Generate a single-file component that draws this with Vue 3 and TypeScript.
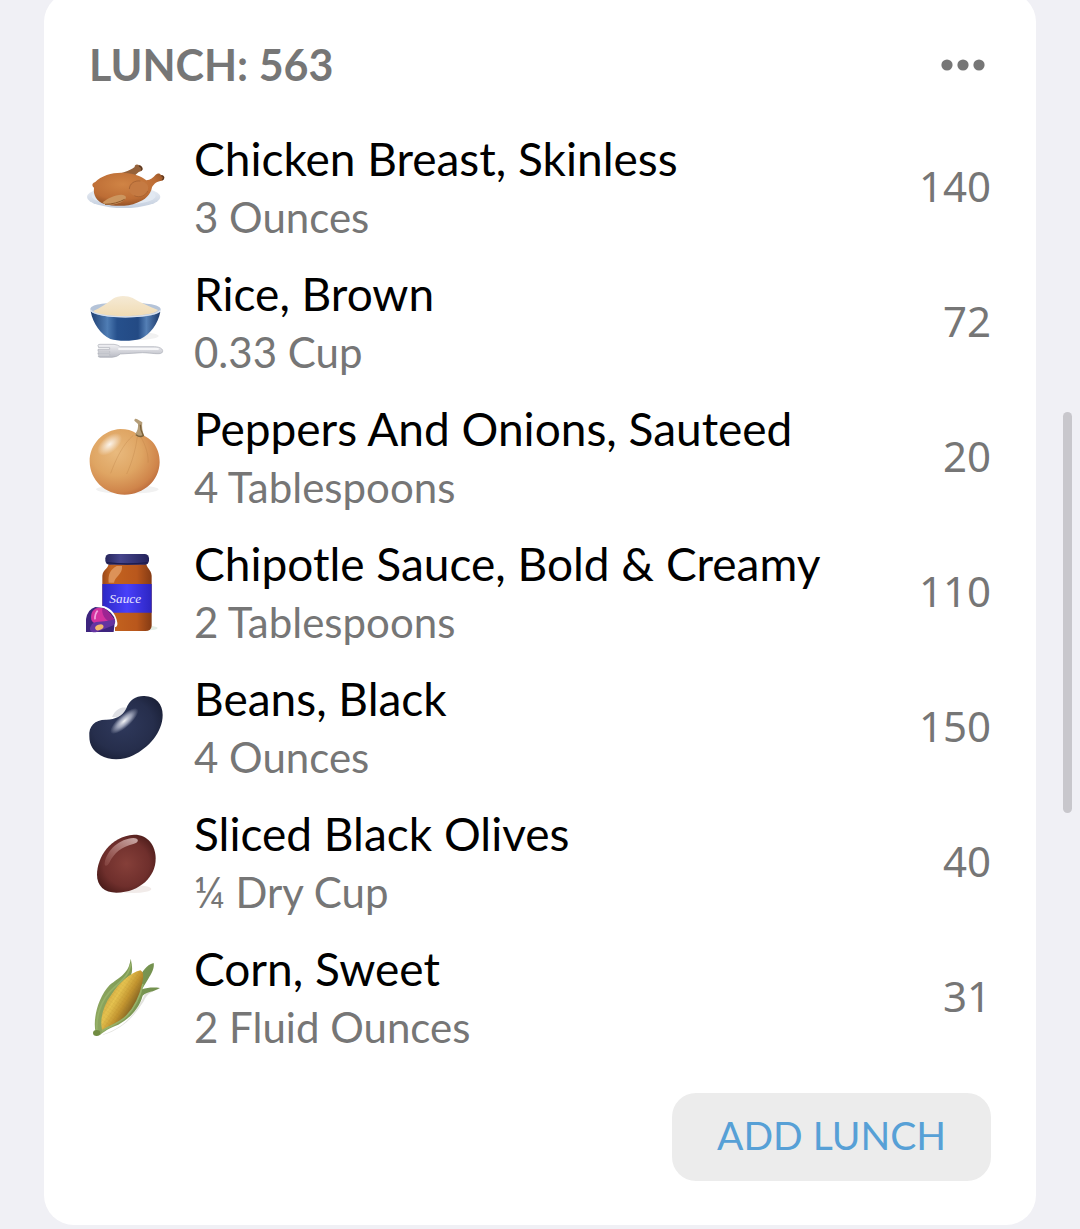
<script setup lang="ts">
import { computed, ref } from 'vue'

type Picture = 'chicken' | 'rice' | 'onion' | 'sauce' | 'bean' | 'olive' | 'corn'

interface Food {
  picture: Picture
  name: string
  serving: string
  calories: number
}

const foods = ref<Food[]>([
  { picture: 'chicken', name: 'Chicken Breast, Skinless', serving: '3 Ounces', calories: 140 },
  { picture: 'rice', name: 'Rice, Brown', serving: '0.33 Cup', calories: 72 },
  { picture: 'onion', name: 'Peppers And Onions, Sauteed', serving: '4 Tablespoons', calories: 20 },
  { picture: 'sauce', name: 'Chipotle Sauce, Bold & Creamy', serving: '2 Tablespoons', calories: 110 },
  { picture: 'bean', name: 'Beans, Black', serving: '4 Ounces', calories: 150 },
  { picture: 'olive', name: 'Sliced Black Olives', serving: '¼ Dry Cup', calories: 40 },
  { picture: 'corn', name: 'Corn, Sweet', serving: '2 Fluid Ounces', calories: 31 },
])

const total = computed(() => foods.value.reduce((sum, food) => sum + food.calories, 0))
</script>

<template>
  <main class="page">
    <section class="card">
      <header class="head">
        <h2 class="heading">LUNCH: {{ total }}</h2>
        <button class="more" type="button" aria-label="Lunch options">
          <svg viewBox="0 0 44 12" aria-hidden="true">
            <circle cx="6" cy="6" r="5.6" />
            <circle cx="22" cy="6" r="5.6" />
            <circle cx="38" cy="6" r="5.6" />
          </svg>
        </button>
      </header>

      <ul class="foods">
        <li v-for="food in foods" :key="food.name" class="food">
          <svg v-if="food.picture === 'chicken'" class="picture" viewBox="0 0 270 300" aria-hidden="true">
            <defs>
              <radialGradient id="roast" cx="0.42" cy="0.35" r="0.7">
                <stop offset="0" stop-color="#d08445" />
                <stop offset="0.65" stop-color="#bd6d35" />
                <stop offset="1" stop-color="#8a4b22" />
              </radialGradient>
              <linearGradient id="plate" x1="0" y1="0" x2="0" y2="1">
                <stop offset="0" stop-color="#eef2f8" />
                <stop offset="1" stop-color="#c3cede" />
              </linearGradient>
            </defs>
            <g transform="translate(-30 18)">
              <ellipse cx="161" cy="156" rx="110" ry="33" fill="url(#plate)" />
              <ellipse cx="161" cy="153" rx="96" ry="25" fill="#e2e9f2" />
              <path d="M126 90C152 86 178 78 194 66C193 58 202 56 208 61C218 63 221 73 214 78C203 81 196 90 184 102Z" fill="#94613a" />
              <path d="M72 128C65 123 66 114 75 112C94 91 129 82 157 83C187 84 213 92 229 106C241 104 250 98 257 89C264 83 270 85 273 90C286 91 286 103 276 107C262 108 251 116 246 127C242 149 225 166 201 173C174 185 134 185 103 177C80 169 69 151 72 128Z" fill="url(#roast)" />
              <path d="M177 132C177 114 194 105 211 108C228 110 239 121 233 137C228 153 208 160 193 152C183 148 177 142 177 132Z" fill="#c57a42" />
              <path d="M178 132C179 115 194 106 211 108M233 138C228 152 208 160 193 152" fill="none" stroke="#9c5a2d" stroke-width="2" />
              <path d="M98 172C113 160 133 150 154 149C169 150 172 159 162 166C148 177 124 182 105 178Z" fill="#cc965f" />
              <path d="M105 178C126 178 148 172 164 163" fill="none" stroke="#8d5527" stroke-width="3" />
              <path d="M207 63C214 65 218 71 214 76M274 92C282 94 283 101 276 105" fill="none" stroke="#5a3822" stroke-width="4" />
            </g>
          </svg>

          <svg v-else-if="food.picture === 'rice'" class="picture" viewBox="0 0 270 300" aria-hidden="true">
            <defs>
              <linearGradient id="bowl">
                <stop offset="0" stop-color="#1f3f72" />
                <stop offset="0.24" stop-color="#4f7db4" />
                <stop offset="0.38" stop-color="#26508c" />
                <stop offset="0.68" stop-color="#234a84" />
                <stop offset="0.8" stop-color="#547fb5" />
                <stop offset="1" stop-color="#1c3969" />
              </linearGradient>
              <linearGradient id="grain" x1="0" y1="0" x2="0" y2="1">
                <stop offset="0" stop-color="#f5ead5" />
                <stop offset="1" stop-color="#f1dcb4" />
              </linearGradient>
              <linearGradient id="fork" x1="0" y1="0" x2="0" y2="1">
                <stop offset="0" stop-color="#f1f1f4" />
                <stop offset="1" stop-color="#b9bbc4" />
              </linearGradient>
            </defs>
            <g transform="translate(-30 18)">
              <ellipse cx="196" cy="168" rx="70" ry="12" fill="#f1f1f1" />
              <path d="M61 87C61 73 100 68 166 68C234 68 271 74 272 88C272 106 224 114 166 114C107 114 62 105 61 87Z" fill="#b4c3d8" />
              <path d="M62 94C84 118 246 118 271 95C264 132 241 162 211 177C186 184 143 184 121 177C92 163 69 132 62 94Z" fill="url(#bowl)" />
              <path d="M70 93C91 84 110 70 129 56C145 45 172 46 188 54C210 67 237 80 264 90C252 113 82 114 70 93Z" fill="url(#grain)" />
              <path d="M62 90C79 117 251 117 271 91" fill="none" stroke="#d9e1ec" stroke-width="4" />
              <path d="M84 196Q84 193 90 193H132Q143 194 151 200L253 200C278 201 282 213 275 219C268 224 245 219 218 218L151 222Q142 231 126 232H90Q83 231 85 227H119V223H84V218H119V214H84V208H119V203H86Z" fill="url(#fork)" stroke="#a9acb5" stroke-width="2" />
              <path d="M145 207H266" stroke="#fff" stroke-width="4" />
            </g>
          </svg>

          <svg v-else-if="food.picture === 'onion'" class="picture" viewBox="0 0 270 300" aria-hidden="true">
            <defs>
              <radialGradient id="onion-skin" cx="0.38" cy="0.35" r="0.72">
                <stop offset="0" stop-color="#e9ba7e" />
                <stop offset="0.5" stop-color="#dfa563" />
                <stop offset="0.85" stop-color="#cf844a" />
                <stop offset="1" stop-color="#b9683a" />
              </radialGradient>
              <radialGradient id="onion-shine">
                <stop offset="0" stop-color="#fff" stop-opacity="0.85" />
                <stop offset="1" stop-color="#fff" stop-opacity="0" />
              </radialGradient>
            </defs>
            <g transform="translate(-30 3)">
              <ellipse cx="172" cy="238" rx="94" ry="13" fill="#f1f1f1" />
              <path d="M59 155C58 103 101 59 151 57C171 57 185 61 201 71C242 77 270 111 269 157C268 211 222 254 164 254C104 253 60 209 59 155Z" fill="url(#onion-skin)" />
              <path d="M190 76C158 102 135 154 122 190M202 80C196 127 182 165 170 192M212 80C229 109 236 138 234 158" fill="none" stroke="#ad7137" stroke-opacity="0.35" stroke-width="2" />
              <ellipse cx="119" cy="103" rx="44" ry="24" transform="rotate(-40 119 103)" fill="url(#onion-shine)" />
              <path d="M193 32C193 26 198 25 202 28L217 37C215 50 217 62 222 77Q208 88 195 73C203 63 205 52 204 42Z" fill="#b49d78" />
              <path d="M211 44C211 57 215 68 220 77Q209 83 198 74" fill="none" stroke="#7b6038" stroke-width="4" />
            </g>
          </svg>

          <svg v-else-if="food.picture === 'sauce'" class="picture" viewBox="0 0 270 300" aria-hidden="true">
            <defs>
              <linearGradient id="jar">
                <stop offset="0" stop-color="#9a4718" />
                <stop offset="0.18" stop-color="#c4641f" />
                <stop offset="0.7" stop-color="#b9571c" />
                <stop offset="1" stop-color="#853b14" />
              </linearGradient>
              <linearGradient id="label">
                <stop offset="0" stop-color="#2d28c4" />
                <stop offset="0.5" stop-color="#4840fa" />
                <stop offset="1" stop-color="#2d25c2" />
              </linearGradient>
              <linearGradient id="lid">
                <stop offset="0" stop-color="#27265c" />
                <stop offset="0.35" stop-color="#46458c" />
                <stop offset="1" stop-color="#23225a" />
              </linearGradient>
            </defs>
            <g transform="translate(-30 -12)">
              <ellipse cx="205" cy="264" rx="58" ry="9" fill="#e4eee6" />
              <path d="M116 69H229C228 83 244 89 245 107V257Q244 273 226 273H112Q97 272 97 257V107C99 88 117 85 116 69Z" fill="url(#jar)" />
              <path d="M140 78C119 90 114 105 116 128H132C134 111 159 102 156 78Z" fill="#efb27f" opacity="0.6" />
              <path d="M97 132H245V218H97Z" fill="url(#label)" />
              <rect x="106" y="42" width="131" height="32" rx="13" fill="url(#lid)" />
              <path d="M110 68Q171 76 234 68" fill="none" stroke="#1d1c4c" stroke-width="4" />
              <text x="118" y="188" class="jar-text">Sauce</text>
              <path d="M44 280V234C46 204 66 188 94 197C119 199 138 220 142 248Q144 258 135 262V280Z" fill="#fff" />
              <path d="M48 276V238Q52 208 76 201L101 204Q130 217 135 241L131 276Z" fill="#3d247e" />
              <path d="M64 240C60 217 71 203 89 203C113 204 120 223 134 239C133 249 115 253 99 251C82 254 71 252 64 240Z" fill="#d3329f" />
              <path d="M97 205C94 222 105 240 120 246L133 240C120 223 113 206 97 205Z" fill="#9c2592" />
              <path d="M66 252C80 241 105 248 134 238C137 245 137 252 127 257L80 276C66 280 58 272 60 263Z" fill="#6434a1" />
              <path d="M83 212Q74 222 75 238" fill="none" stroke="#f2a3df" stroke-width="5" />
              <ellipse cx="88" cy="262" rx="13" ry="8" transform="rotate(-20 88 262)" fill="#f2b76b" />
            </g>
          </svg>

          <svg v-else-if="food.picture === 'bean'" class="picture" viewBox="0 0 270 300" aria-hidden="true">
            <defs>
              <radialGradient id="bean-skin" cx="0.45" cy="0.45" r="0.7">
                <stop offset="0" stop-color="#2f395c" />
                <stop offset="0.6" stop-color="#262e4c" />
                <stop offset="1" stop-color="#151a2e" />
              </radialGradient>
              <radialGradient id="bean-shine">
                <stop offset="0" stop-color="#fff" stop-opacity="0.95" />
                <stop offset="0.5" stop-color="#d7dbea" stop-opacity="0.65" />
                <stop offset="1" stop-color="#d7dbea" stop-opacity="0" />
              </radialGradient>
            </defs>
            <g transform="translate(-30 3)">
              <path d="M126 111C137 88 151 81 169 83L162 112Z" fill="#dfe0e5" />
              <path d="M58 169C55 138 76 118 109 119C136 118 157 109 168 87C179 58 199 47 223 48C258 48 278 73 278 105C278 157 235 204 190 226C161 241 119 243 91 226C70 213 58 196 58 169Z" fill="url(#bean-skin)" />
              <ellipse cx="163" cy="123" rx="54" ry="19" transform="rotate(-42 163 123)" fill="url(#bean-shine)" />
            </g>
          </svg>

          <svg v-else-if="food.picture === 'olive'" class="picture" viewBox="0 0 270 300" aria-hidden="true">
            <defs>
              <radialGradient id="olive-skin" cx="0.5" cy="0.5" r="0.6">
                <stop offset="0" stop-color="#853f39" />
                <stop offset="0.65" stop-color="#6f2f2c" />
                <stop offset="1" stop-color="#481a18" />
              </radialGradient>
              <linearGradient id="olive-shine" x1="0.8" y1="0" x2="0.2" y2="1">
                <stop offset="0" stop-color="#f6e1df" stop-opacity="0.65" />
                <stop offset="1" stop-color="#d99d96" stop-opacity="0.2" />
              </linearGradient>
            </defs>
            <g transform="translate(-30 18)">
              <ellipse cx="190" cy="207" rx="54" ry="12" fill="#f1ebe9" />
              <path d="M81 164C81 112 121 48 192 44C231 43 257 74 257 116C257 169 211 216 139 218C103 217 81 198 81 164Z" fill="url(#olive-skin)" />
              <path d="M104 130C110 89 150 56 190 54C208 55 208 67 190 72C155 80 133 98 118 128C112 139 103 140 104 130Z" fill="url(#olive-shine)" />
            </g>
          </svg>

          <svg v-else class="picture" viewBox="0 0 270 300" aria-hidden="true">
            <defs>
              <linearGradient id="cob" x1="0.2" y1="0.25" x2="0.75" y2="0.7">
                <stop offset="0" stop-color="#cda342" />
                <stop offset="0.35" stop-color="#e6c350" />
                <stop offset="0.65" stop-color="#c39530" />
                <stop offset="1" stop-color="#785a20" />
              </linearGradient>
              <pattern id="kernels" width="10" height="9" patternUnits="userSpaceOnUse" patternTransform="rotate(-55)">
                <path d="M0 0H10M0 0V9" stroke="#9b701b" stroke-opacity="0.22" stroke-width="2" />
              </pattern>
              <linearGradient id="husk">
                <stop offset="0" stop-color="#8da65f" />
                <stop offset="1" stop-color="#718f4d" />
              </linearGradient>
            </defs>
            <g transform="translate(-30 -12)">
              <path d="M100 268C161 247 197 210 226 145L262 133C238 143 229 152 222 167C193 214 155 255 98 270Z" fill="#e2e2de" />
              <path d="M77 263C67 220 86 154 119 120C150 95 177 85 182 41C190 77 187 88 173 105L210 90C219 81 227 60 251 54C254 70 244 87 235 101L216 133C232 128 249 126 270 129C251 141 231 140 218 152C207 193 177 221 145 239C119 248 101 260 90 270Z" fill="url(#husk)" />
              <path d="M96 254C89 223 99 182 124 149C148 113 180 84 211 76C223 81 220 99 216 118C207 172 174 218 135 240C119 248 106 254 96 254Z" fill="url(#cob)" />
              <path d="M96 254C89 223 99 182 124 149C148 113 180 84 211 76C223 81 220 99 216 118C207 172 174 218 135 240C119 248 106 254 96 254Z" fill="url(#kernels)" />
              <path d="M81 258C77 219 91 165 129 131C151 110 178 93 182 56M96 259C112 244 146 238 171 212C198 184 210 155 219 117" fill="none" stroke="#96b168" stroke-width="5" />
              <ellipse cx="80" cy="264" rx="11" ry="9" fill="#718c42" />
            </g>
          </svg>

          <div class="about">
            <h3 class="name">{{ food.name }}</h3>
            <p class="serving">{{ food.serving }}</p>
          </div>
          <span class="calories">{{ food.calories }}</span>
        </li>
      </ul>

      <footer class="foot">
        <button class="add" type="button">ADD LUNCH</button>
      </footer>
    </section>
    <div class="scroll-thumb" aria-hidden="true"></div>
  </main>
</template>

<style>
body {
  margin: 0;
  background: #f0f0f5;
}
</style>

<style scoped>
.page {
  position: relative;
  box-sizing: border-box;
  min-height: 100vh;
  padding: 0 44px 4px;
  overflow: hidden;
  background: #f0f0f5;
  font-family: Lato, "Noto Sans", sans-serif;
}

.card {
  margin-top: -8px;
  padding: 44px 45px;
  border-radius: 30px;
  background: #fff;
}

.head {
  display: flex;
  align-items: center;
  justify-content: space-between;
  height: 58px;
  margin-bottom: 35px;
}

.heading {
  margin: 0;
  color: #767676;
  font-size: 43px;
  font-weight: 700;
  line-height: 56px;
}

.more {
  display: flex;
  padding: 6px;
  border: 0;
  background: none;
  cursor: pointer;
}

.more svg {
  width: 44px;
  height: 12px;
  fill: #767676;
}

.foods {
  display: flex;
  flex-direction: column;
  gap: 15px;
  margin: 0;
  padding: 0;
  list-style: none;
}

.food {
  display: flex;
  align-items: center;
}

.picture {
  flex: none;
  width: 90px;
  height: 100px;
  margin: 0 24px 0 -9px;
}

.jar-text {
  fill: #e5e2ff;
  font-family: "Liberation Serif", serif;
  font-size: 40px;
  font-style: italic;
}

.about {
  flex: 1;
  min-width: 0;
  padding-bottom: 2px;
}

.name,
.serving {
  margin: 0;
  font-weight: 400;
  line-height: 59px;
}

.name {
  color: #000;
  font-size: 46px;
}

.serving {
  color: #767676;
  font-size: 42px;
}

.calories {
  padding-bottom: 8px;
  color: #767676;
  font-family: "Noto Sans", sans-serif;
  font-size: 42px;
}

.foot {
  display: flex;
  justify-content: flex-end;
  margin-top: 34px;
}

.add {
  height: 88px;
  padding: 0 45px 4px;
  border: 0;
  border-radius: 24px;
  background: #ececec;
  color: #57a0d6;
  font: inherit;
  font-size: 39px;
  cursor: pointer;
}

.scroll-thumb {
  position: absolute;
  top: 412px;
  right: 8px;
  width: 9px;
  height: 401px;
  border-radius: 5px;
  background: #c8c7cc;
}
</style>
